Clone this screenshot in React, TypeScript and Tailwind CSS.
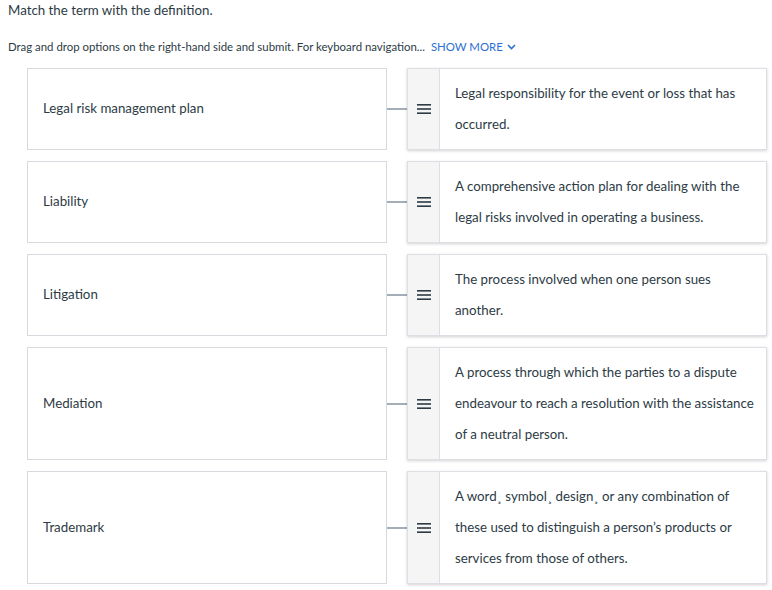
const rows: { term: string; def: string[] }[] = [
  {
    term: "Legal risk management plan",
    def: ["Legal responsibility for the event or loss that has", "occurred."],
  },
  {
    term: "Liability",
    def: [
      "A comprehensive action plan for dealing with the",
      "legal risks involved in operating a business.",
    ],
  },
  {
    term: "Litigation",
    def: ["The process involved when one person sues", "another."],
  },
  {
    term: "Mediation",
    def: [
      "A process through which the parties to a dispute",
      "endeavour to reach a resolution with the assistance",
      "of a neutral person.",
    ],
  },
  {
    term: "Trademark",
    def: [
      "A word\u00b8 symbol\u00b8 design\u00b8 or any combination of",
      "these used to distinguish a person\u2019s products or",
      "services from those of others.",
    ],
  },
];

function Handle() {
  return (
    <div className="w-[32px] shrink-0 bg-[#f5f5f5] border-r border-[#dcdfe3] flex items-center justify-center">
      <svg width="14" height="10" viewBox="0 0 14 10" fill="none">
        <rect x="0" y="0" width="14" height="1.6" fill="#2d3b45" />
        <rect x="0" y="4.2" width="14" height="1.6" fill="#2d3b45" />
        <rect x="0" y="8.4" width="14" height="1.6" fill="#2d3b45" />
      </svg>
    </div>
  );
}

export default function App() {
  return (
    <div className="w-[772px] h-[590px] bg-white text-[#2d3b45] font-['Lato','Open_Sans',sans-serif] overflow-hidden">
      <div className="px-[8px] pt-[1px] text-[13.3px] leading-[18px]">Match the term with the definition.</div>
      <div className="px-[8px] mt-[20px] text-[11.4px] leading-[16px] flex items-center gap-[6px]">
        <span>Drag and drop options on the right-hand side and submit. For keyboard navigation...</span>
        <span className="text-[#2d6fd2] flex items-center gap-[4px]">
          SHOW MORE
          <svg width="9" height="6" viewBox="0 0 9 6" fill="none">
            <path d="M1 1l3.5 3.5L8 1" stroke="#2d6fd2" strokeWidth="1.6" />
          </svg>
        </span>
      </div>
      <div className="mt-[13px] pl-[27px] pr-[5px] flex flex-col gap-[11px]">
        {rows.map((r) => (
          <div key={r.term} className="flex items-stretch">
            <div className="w-[360px] shrink-0 border border-[#d6d9dd] flex items-center px-[15px] text-[13.3px]">
              {r.term}
            </div>
            <div className="w-[20px] shrink-0 flex items-center">
              <div className="h-[2px] w-full bg-[#a3aeb8]" />
            </div>
            <div className="w-[360px] shrink-0 flex border border-[#dcdfe3] shadow-[0_1px_3px_rgba(0,0,0,0.18)]">
              <Handle />
              <div className="py-[9px] px-[15px] text-[13.3px] leading-[31px]">
                {r.def.map((l) => (
                  <div key={l} className="whitespace-nowrap">{l}</div>
                ))}
              </div>
            </div>
          </div>
        ))}
      </div>
    </div>
  );
}
